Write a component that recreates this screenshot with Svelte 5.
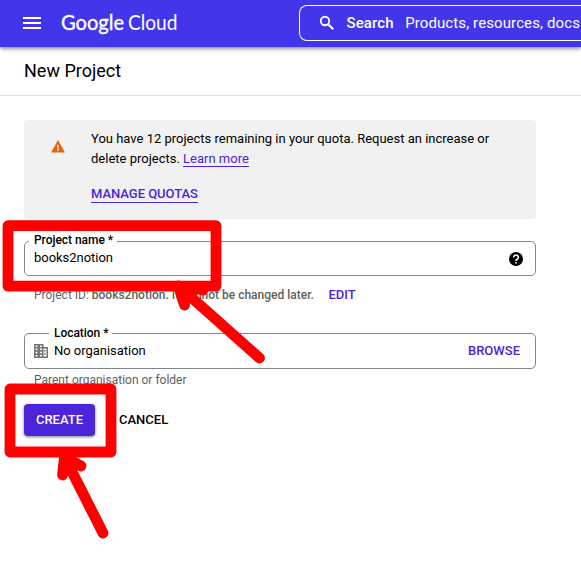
<script>
  const projectName = 'books2notion';
</script>

<div class="page">
  <header>
    <svg class="menu" width="18" height="12" viewBox="0 0 18 12"><path fill="#fff" d="M0 0h18v2H0zM0 5h18v2H0zM0 10h18v2H0z" /></svg>
    <svg class="logo" width="120" height="30" viewBox="0 0 120 30">
      <text x="0" y="22" class="google" textLength="63" lengthAdjust="spacingAndGlyphs">Google</text>
      <text x="67" y="22" class="cloud" textLength="49.5" lengthAdjust="spacingAndGlyphs">Cloud</text>
    </svg>
    <div class="search">
      <svg width="20" height="20" viewBox="0 0 20 20"><path d="M11.4 11.4L16.200 16.200" stroke="#fff" stroke-width="2.1" /><circle cx="8" cy="8" r="4.2" fill="none" stroke="#fff" stroke-width="1.9" /></svg>
      <b>Search</b><span>Products, resources, docs</span>
    </div>
  </header>

  <h1>New Project</h1>

  <main>
    <section class="notice">
      <svg width="14" height="13" viewBox="0 0 14 13"><path fill="#e8650a" d="M7 0l7 12.6H0z" /><path fill="#f1f1f1" d="M6.2 4.8h1.6v3.6H6.2zM6.2 9.3h1.6v1.4H6.2z" /></svg>
      <div>
        <p>You have 12 projects remaining in your quota. Request an increase or<br />delete projects. <a href="#learn">Learn more</a></p>
        <a class="strong" href="#quotas">MANAGE QUOTAS</a>
      </div>
    </section>

    <div class="field name">
      <label for="name">Project name *</label>
      <span class="value" id="name">{projectName}</span>
      <svg width="14" height="14" viewBox="0 0 14 14"><circle cx="7" cy="7" r="7" /><path d="M4.700 5.400a2.300 2.300 0 1 1 3.600 1.800Q7 7.900 7 8.900" fill="none" stroke="#fff" stroke-width="1.6" /><path fill="#fff" d="M6.2 10h1.6v1.500H6.2z" /></svg>
    </div>
    <p class="hint id">Project ID: <b>{projectName}. It cannot be changed later.</b><button class="link">EDIT</button></p>

    <div class="field location">
      <label for="location">Location *</label>
      <svg width="14" height="14" viewBox="0 0 14 14"><path fill="#747474" fill-rule="evenodd" d="M0 0h9.500v3H14v11H0zM1.500 1.500v1.500H3.500V1.500zM6 1.500v1.500H8V1.500zM1.500 4.500V6H3.500V4.500zM6 4.500V6H8V4.500zM1.500 7.700v1.500H3.500V7.700zM6 7.700v1.500H8V7.700zM1.500 11v1.500H3.500V11zM6 11v1.500H8V11zM9.500 4.500v8h3v-8z" /><path fill="#747474" d="M10 6h1.500v1.500H10zM10 9h1.500v1.500H10z" /></svg>
      <span class="value" id="location">No organisation</span>
      <button class="link">BROWSE</button>
    </div>
    <p class="hint parent">Parent organisation or folder</p>

    <div class="actions">
      <button class="create">CREATE</button>
      <button class="cancel">CANCEL</button>
    </div>
  </main>

  <svg class="marks" width="581" height="565" viewBox="0 0 581 565">
    <rect x="8" y="225.700" width="208" height="60.500" />
    <path d="M259.500 358L178.500 286L184.500 305M178.500 286L203 290" />
    <rect x="10" y="389" width="101" height="63" />
    <path d="M103 533L64.500 457L62.500 475M64.500 457L81 466" />
  </svg>
</div>

<style>
  :global(body) { margin: 0; background: #fff; }
  .page { position: relative; width: 581px; height: 565px; overflow: hidden; font: 13px/20px Roboto, sans-serif; color: #000; }
  header { box-sizing: border-box; height: 47px; padding-bottom: 1px; display: flex; align-items: center; background: #4335ea; color: #fff; box-shadow: 0 1px 5px rgba(0, 0, 0, .6); }
  .menu { margin-left: 23px; flex: none; }
  .logo { margin-left: 20px; flex: none; fill: #fff; }
  .google, .cloud { font-family: Lato, sans-serif; font-size: 20.5px; font-weight: 400; }
  .google { stroke: #fff; stroke-width: .35; }
  .search { box-sizing: border-box; margin-left: 118px; width: 282px; height: 36px; flex: none; display: flex; align-items: center; padding-left: 17px; border: 1px solid #fff; border-right: 0; border-radius: 8px 0 0 8px; font-size: 15px; white-space: nowrap; }
  .search b { font-weight: 500; margin-left: 9.5px; letter-spacing: .1px; }
  .search span { margin-left: 11.5px; letter-spacing: .11px; }
  h1 { margin: 0; height: 48px; line-height: 48px; padding-left: 24px; font-size: 18px; font-weight: 400; border-bottom: 1px solid #dedede; }
  main { width: 512px; padding: 24px 0 0 24px; }
  p { margin: 0; }
  .notice { box-sizing: border-box; height: 99px; display: flex; background: #f1f1f1; border-radius: 4px; padding: 9px 0 0 27px; }
  .notice svg { margin: 11px 26px 0 0; }
  .notice a { color: #4b25d9; text-decoration: none; border-bottom: 1px solid; }
  .notice .strong { display: inline-block; line-height: 16px; margin-top: 17px; font-weight: 500; letter-spacing: -.03px; }
  .field { position: relative; box-sizing: border-box; display: flex; align-items: center; border: 1px solid #80848b; border-radius: 5px; padding: 0 12px 0 9px; }
  .name { height: 35px; margin-top: 22px; }
  .location { height: 36px; margin-top: 28px; }
  label { position: absolute; left: 4px; top: -9px; padding: 0 4px 0 5px; background: #fff; font-size: 12px; line-height: 16px; font-weight: 500; letter-spacing: -.04px; }
  .name label { top: -10px; }
  .location label { left: 24px; }
  .value { flex: 1; letter-spacing: -.03px; }
  .name .value { padding-bottom: 2px; }
  .location .value { margin-left: 6px; }
  .location .link { margin-right: 3px; }
  .hint { font-size: 12px; color: #5f5f5f; padding-left: 10px; line-height: 20px; white-space: nowrap; }
  .id { padding-top: 9px; }
  .parent { padding-top: 1px; }
  .hint b { font-weight: 500; }
  button { border: 0; background: none; padding: 0; font: 500 13px/20px Roboto, sans-serif; color: #000; }
  .link { color: #4b25d9; }
  .hint .link { margin-left: 14.5px; }
  .actions { display: flex; margin-top: 14px; }
  .create { width: 71px; height: 32px; background: #4b25d9; color: #fff; border-radius: 4px; box-shadow: 0 1px 3px rgba(0, 0, 0, .5); }
  .cancel { margin-left: 24px; }
  .marks { position: absolute; left: 0; top: 0; fill: none; stroke: #f00; stroke-width: 10.8; stroke-linecap: round; stroke-linejoin: round; }
</style>
